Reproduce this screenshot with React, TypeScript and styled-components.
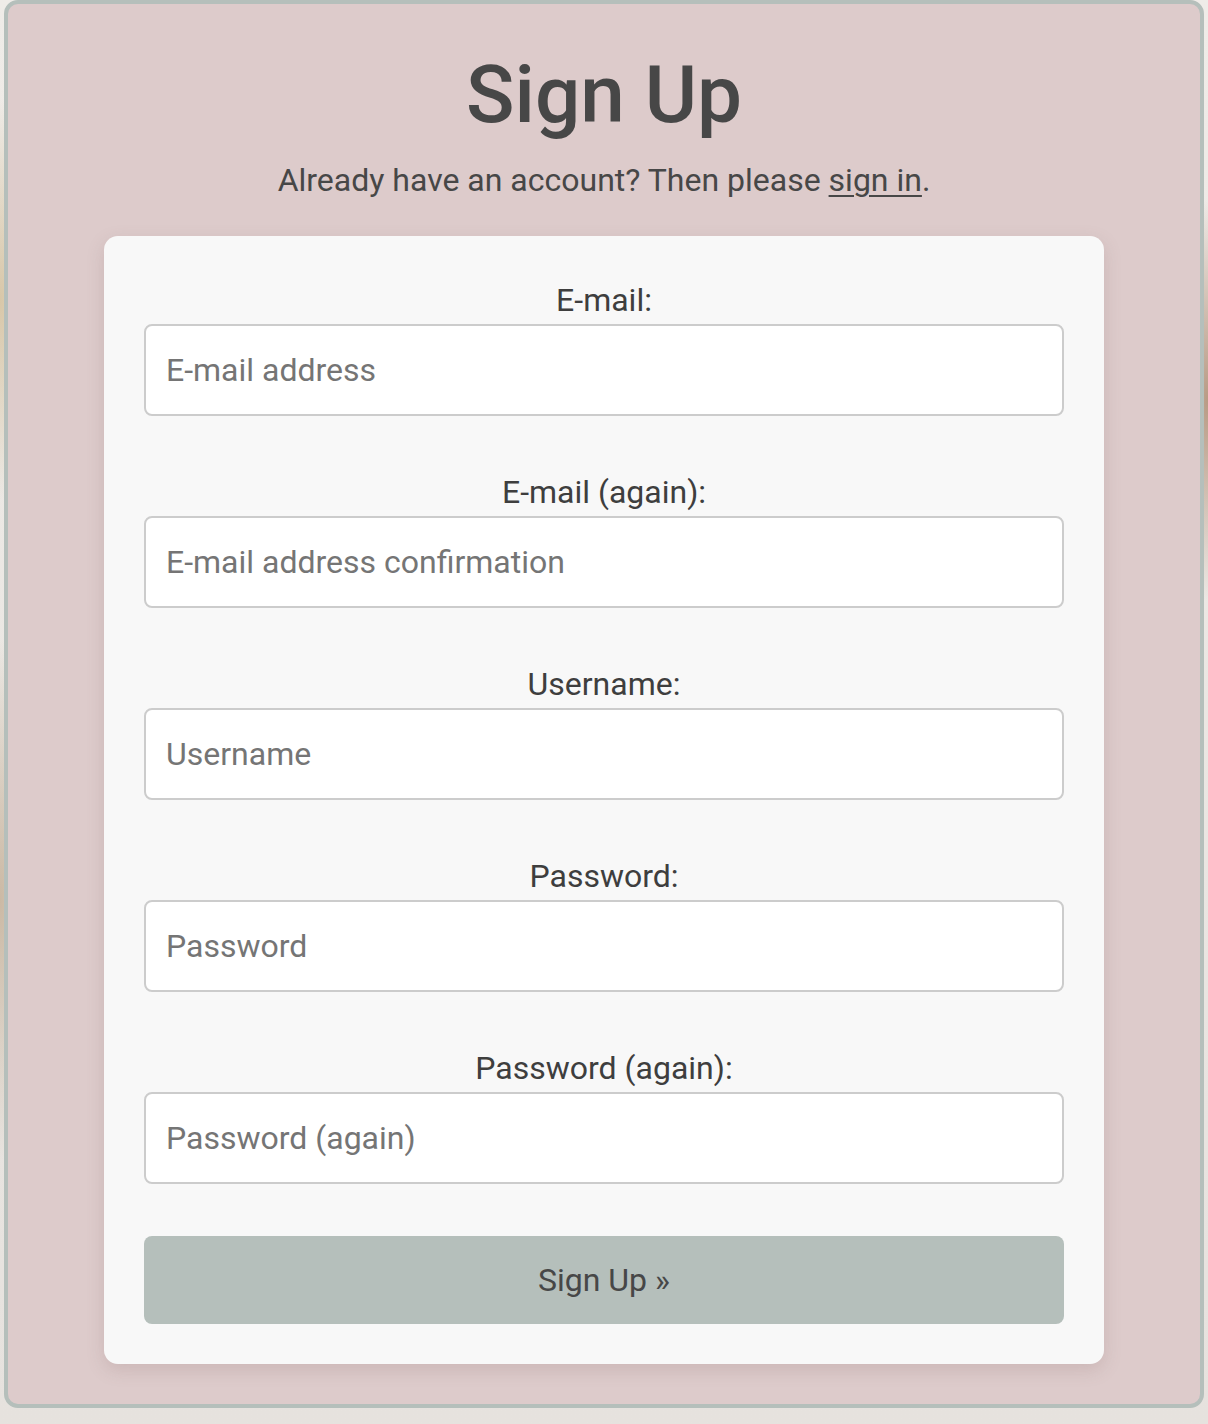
import React, { useState } from "react";
import styled, { createGlobalStyle } from "styled-components";

const GlobalStyle = createGlobalStyle`
  html, body {
    margin: 0;
    padding: 0;
  }
  body {
    font-family: Roboto, "Liberation Sans", Arial, sans-serif;
    background:
      radial-gradient(ellipse 60px 200px at 0px 300px, #d8c7a8 0%, rgba(216, 199, 168, 0) 100%),
      radial-gradient(ellipse 60px 260px at 0px 900px, #cbb9a4 0%, rgba(203, 185, 164, 0) 100%),
      radial-gradient(ellipse 60px 200px at 1208px 400px, #b89a84 0%, rgba(184, 154, 132, 0) 100%),
      linear-gradient(180deg, #efece8 0%, #e6e2de 100%);
    min-height: 1424px;
  }
`;

const Page = styled.div`
  padding: 0 4px 16px 4px;
`;

const Panel = styled.section`
  background-color: #ddcbcb;
  border: 4px solid #b5bfbb;
  border-radius: 14px;
  padding: 43px 96px 40px;
  display: flex;
  flex-direction: column;
  align-items: center;
`;

const Title = styled.h1`
  margin: 0;
  font-size: 80px;
  font-weight: 500;
  line-height: 96px;
  color: #474747;
`;

const Lead = styled.p`
  margin: 16px 0 35px;
  font-size: 32px;
  line-height: 42px;
  color: #474747;

  a {
    color: inherit;
    text-decoration: underline;
    text-underline-offset: 4px;
    text-decoration-thickness: 2px;
  }
`;

const Card = styled.form`
  align-self: stretch;
  background-color: #f8f8f8;
  border-radius: 14px;
  box-shadow: 0 6px 18px rgba(120, 90, 90, 0.18);
  padding: 45px 40px 40px;
  display: flex;
  flex-direction: column;
`;

const Field = styled.div`
  display: flex;
  flex-direction: column;
  align-items: center;
  margin-bottom: 57px;

  &:last-of-type {
    margin-bottom: 52px;
  }
`;

const Label = styled.label`
  font-size: 32px;
  line-height: 38px;
  color: #3e3e3e;
  margin-bottom: 5px;
`;

const Input = styled.input`
  box-sizing: border-box;
  width: 100%;
  height: 92px;
  padding: 0 20px;
  border: 2px solid #cccccc;
  border-radius: 8px;
  background-color: #ffffff;
  font-family: Roboto, "Liberation Sans", Arial, sans-serif;
  font-size: 32px;
  color: #333;
  outline: none;

  &::placeholder {
    color: #757575;
  }
`;

const SubmitButton = styled.button`
  height: 88px;
  border: none;
  border-radius: 8px;
  background-color: #b5bfbb;
  color: #474747;
  font-family: Roboto, "Liberation Sans", Arial, sans-serif;
  font-size: 32px;
  cursor: pointer;
`;

const fields = [
  { id: "email", label: "E-mail:", type: "email", placeholder: "E-mail address" },
  { id: "email2", label: "E-mail (again):", type: "email", placeholder: "E-mail address confirmation" },
  { id: "username", label: "Username:", type: "text", placeholder: "Username" },
  { id: "password1", label: "Password:", type: "password", placeholder: "Password" },
  { id: "password2", label: "Password (again):", type: "password", placeholder: "Password (again)" },
];

export default function App() {
  const [values, setValues] = useState<Record<string, string>>({});

  const handleChange = (event: React.ChangeEvent<HTMLInputElement>) => {
    const { name, value } = event.target;
    setValues((prev) => ({ ...prev, [name]: value }));
  };

  return (
    <>
      <GlobalStyle />
      <Page>
        <Panel>
          <Title>Sign Up</Title>
          <Lead>
            Already have an account? Then please <a href="#">sign in</a>.
          </Lead>
          <Card onSubmit={(e) => e.preventDefault()}>
            {fields.map((field) => (
              <Field key={field.id}>
                <Label htmlFor={field.id}>{field.label}</Label>
                <Input
                  id={field.id}
                  name={field.id}
                  type={field.type}
                  placeholder={field.placeholder}
                  value={values[field.id] ?? ""}
                  onChange={handleChange}
                />
              </Field>
            ))}
            <SubmitButton type="submit">Sign Up »</SubmitButton>
          </Card>
        </Panel>
      </Page>
    </>
  );
}
